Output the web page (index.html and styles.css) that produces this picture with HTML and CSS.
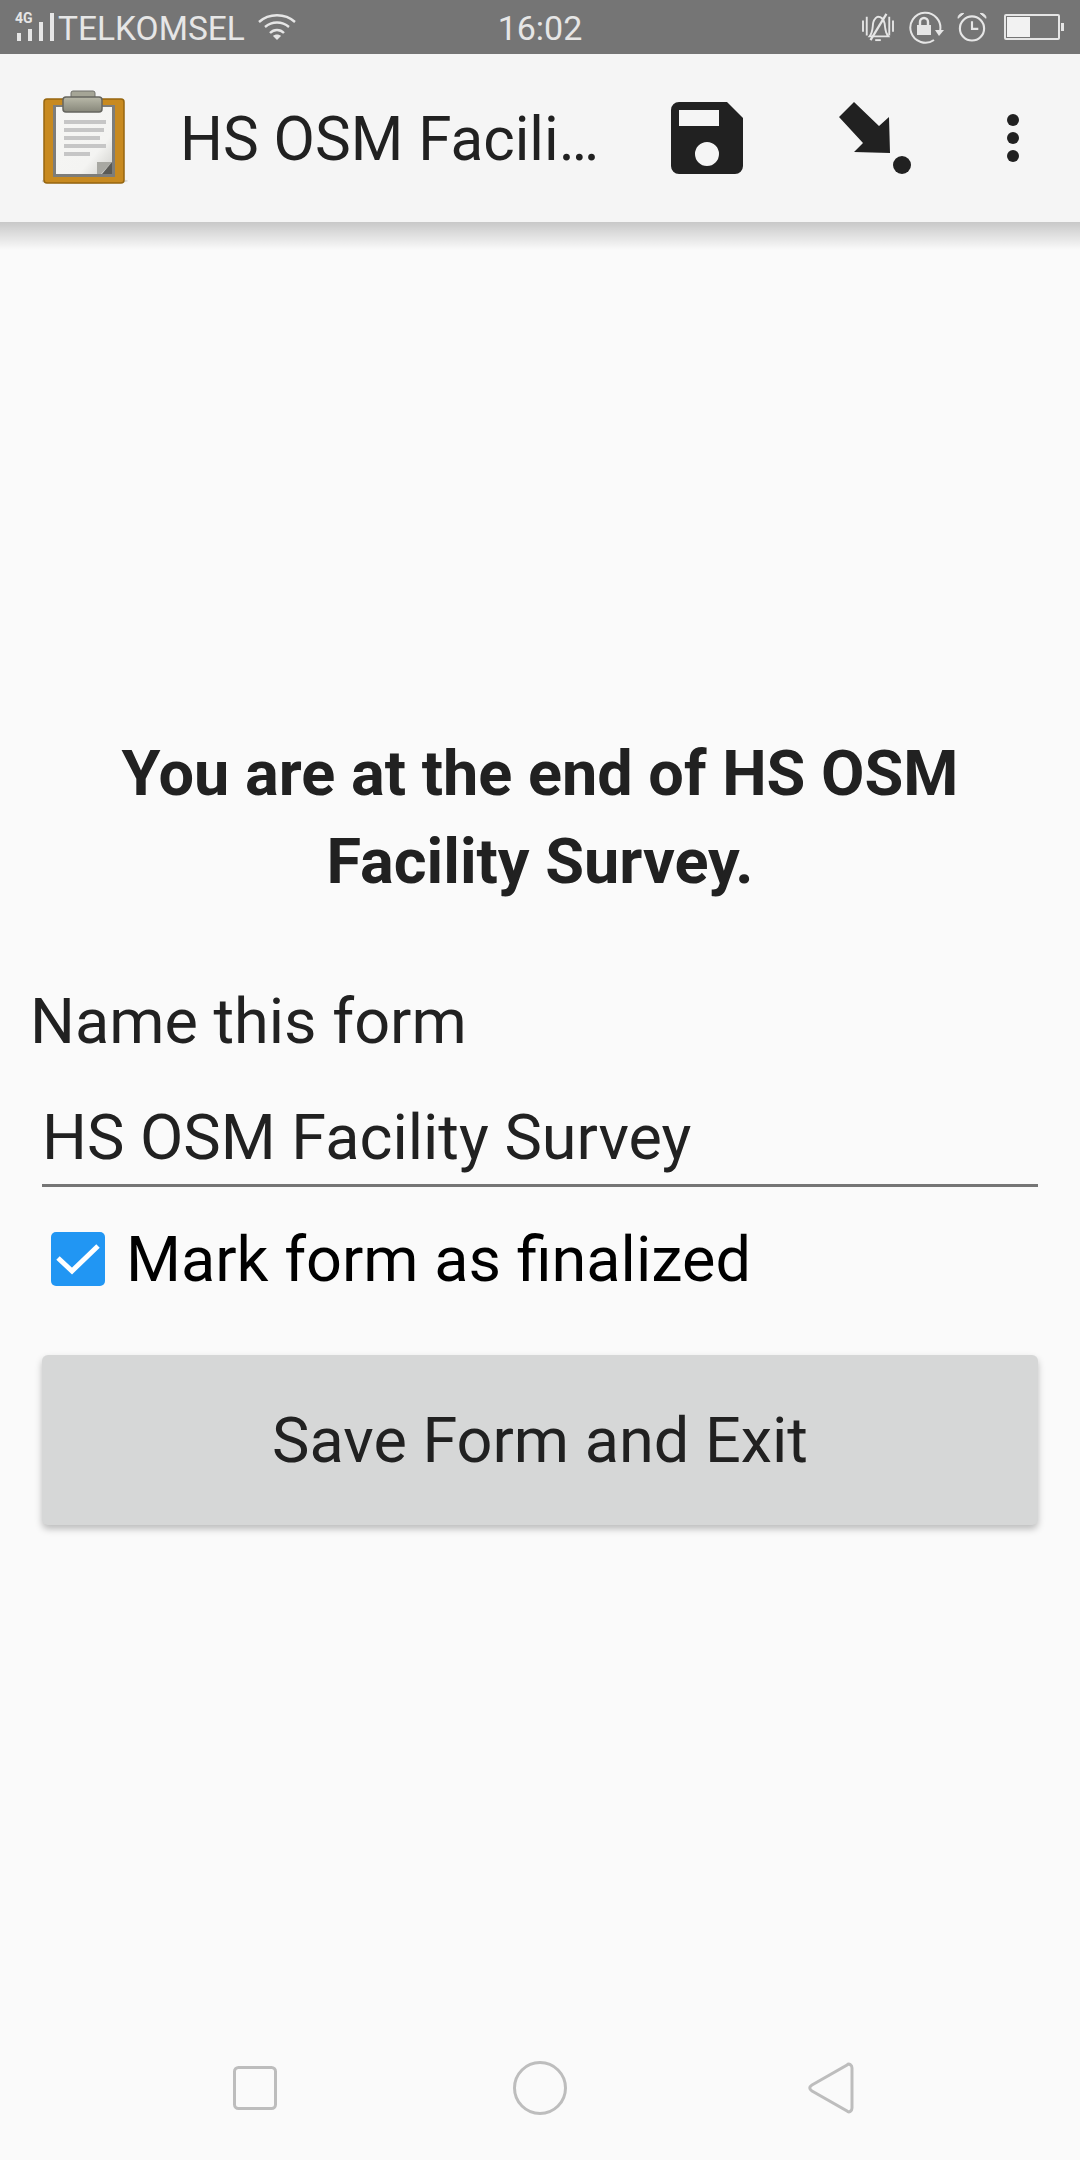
FILE: index.html
```html
<!DOCTYPE html>
<html lang="en">
<head>
    <meta charset="UTF-8">
    <meta name="viewport" content="width=device-width, initial-scale=1.0">
    <title>HS OSM Facility Survey</title>
    <link rel="stylesheet" href="styles.css">
</head>
<body>
    <div class="phone">
        <div class="status-bar">
            <div class="status-left">
                <svg class="signal" width="40" height="34" viewBox="0 0 40 34">
                    <text x="1" y="13" class="net-type">4G</text>
                    <rect x="3" y="23" width="4" height="8" fill="#e6e6e6"/>
                    <rect x="14" y="19" width="4" height="12" fill="#e6e6e6"/>
                    <rect x="25" y="12" width="4" height="19" fill="#e6e6e6"/>
                    <rect x="36" y="3" width="4" height="28" fill="#e6e6e6"/>
                </svg>
                <span class="carrier">TELKOMSEL</span>
                <svg class="wifi" width="38" height="28" viewBox="0 0 38 28" fill="none" stroke="#e6e6e6" stroke-width="2.4">
                    <path d="M1 9 C11 0 27 0 37 9"/>
                    <path d="M7 14 C14 8 24 8 31 14"/>
                    <path d="M12 20 C16 16 22 16 26 20"/>
                    <path d="M15 23 L19 27 L23 23 C21 21 17 21 15 23Z" fill="#e6e6e6" stroke="none"/>
                </svg>
            </div>
            <span class="clock">16:02</span>
            <div class="status-right">
                <svg width="34" height="30" viewBox="0 0 36 32" fill="none" stroke="#e6e6e6" stroke-width="2">
                    <path d="M2 9V21M6 5V25M30 5V25M34 9V21"/>
                    <path d="M9 26C13 21 12 15 13 11C14 7 17 5 18 5C22 5 24 8 25 12C26 17 25 21 29 26Z"/>
                    <path d="M15 30H21"/>
                    <path d="M10 30L27 2" stroke-width="2.4"/>
                </svg>
                <svg width="36" height="33" viewBox="0 0 36 33" fill="none" stroke="#e6e6e6" stroke-width="2">
                    <path d="M32 20A15 15 0 1 0 26 29"/>
                    <path d="M27 19H36L31 25Z" fill="#e6e6e6" stroke="none"/>
                    <rect x="9" y="14" width="14" height="10" fill="#e6e6e6" stroke="none"/>
                    <path d="M12 14V11A4 4 0 0 1 20 11V14" stroke-width="2.4"/>
                </svg>
                <svg width="30" height="30" viewBox="0 0 31 30" fill="none" stroke="#e6e6e6" stroke-width="2.2">
                    <circle cx="15.5" cy="16.5" r="12.5"/>
                    <path d="M15.5 9V17H22"/>
                    <path d="M1 6A5 5 0 0 1 7 1Z" fill="#e6e6e6" stroke-width="1"/>
                    <path d="M30 6A5 5 0 0 0 24 1Z" fill="#e6e6e6" stroke-width="1"/>
                </svg>
                <div class="battery">
                    <div class="battery-body"><div class="battery-level"></div></div>
                    <div class="battery-tip"></div>
                </div>
            </div>
        </div>

        <div class="toolbar">
            <svg class="app-icon" width="88" height="96" viewBox="0 0 88 96">
                <defs>
                    <linearGradient id="paper" x1="0" y1="0" x2="1" y2="1">
                        <stop offset="0" stop-color="#f6f6f4"/>
                        <stop offset="0.7" stop-color="#f4f4f2"/>
                        <stop offset="1" stop-color="#cfcfcb"/>
                    </linearGradient>
                    <linearGradient id="clip" x1="0" y1="0" x2="0" y2="1">
                        <stop offset="0" stop-color="#b9b9a9"/>
                        <stop offset="1" stop-color="#87877a"/>
                    </linearGradient>
                </defs>
                <ellipse cx="42" cy="91" rx="44" ry="3" fill="#000" opacity="0.12"/>
                <rect x="2" y="9" width="80" height="84" rx="3" fill="#c88a20" stroke="#96660f" stroke-width="1.5"/>
                <rect x="11" y="15" width="62" height="72" fill="#7d7d7a"/>
                <rect x="14" y="17" width="56" height="67" fill="url(#paper)"/>
                <rect x="22" y="30" width="42" height="4" fill="#c6c6c6"/>
                <rect x="22" y="38" width="40" height="4" fill="#c6c6c6"/>
                <rect x="22" y="46" width="36" height="4" fill="#c6c6c6"/>
                <rect x="22" y="54" width="42" height="4" fill="#c6c6c6"/>
                <rect x="22" y="62" width="26" height="4" fill="#c6c6c6"/>
                <path d="M55 84V72H70L59 84Z" fill="#a8a8a2"/>
                <path d="M60 84L70 72V84Z" fill="#5a5a56"/>
                <rect x="29" y="1" width="24" height="10" rx="2" fill="#a5a596" stroke="#70706a"/>
                <rect x="21" y="7" width="39" height="15" rx="3" fill="url(#clip)" stroke="#65655f" stroke-width="1.5"/>
            </svg>
            <span class="toolbar-title">HS OSM Facili…</span>
            <div class="toolbar-actions">
                <svg width="72" height="72" viewBox="0 0 72 72">
                    <path fill-rule="evenodd" fill="#212121" d="M8 0H56L72 16V64A8 8 0 0 1 64 72H8A8 8 0 0 1 0 64V8A8 8 0 0 1 8 0ZM8 8V24H48V8ZM36 40A12 12 0 1 0 36 64A12 12 0 1 0 36 40Z"/>
                </svg>
                <svg class="action-jump" width="72" height="72" viewBox="0 0 72 72">
                    <path fill="#212121" d="M0 15L15 0L40 24L50 15L51 51L15 50L24 41Z"/>
                    <circle cx="63" cy="63" r="9" fill="#212121"/>
                </svg>
                <svg class="action-more" width="12" height="48" viewBox="0 0 12 48">
                    <circle cx="6" cy="6" r="6" fill="#212121"/>
                    <circle cx="6" cy="24" r="6" fill="#212121"/>
                    <circle cx="6" cy="42" r="6" fill="#212121"/>
                </svg>
            </div>
        </div>

        <main class="content">
            <h1 class="end-title">You are at the end of HS OSM<br>Facility Survey.</h1>
            <div class="name-label">Name this form</div>
            <div class="name-field">HS OSM Facility Survey</div>
            <div class="finalize-row">
                <span class="checkbox">
                    <svg width="54" height="54" viewBox="0 0 54 54">
                        <path d="M7 26L21 39L47 14" fill="none" stroke="#fff" stroke-width="5"/>
                    </svg>
                </span>
                <span class="finalize-label">Mark form as finalized</span>
            </div>
            <div class="save-button">Save Form and Exit</div>
        </main>

        <div class="nav-bar">
            <svg width="44" height="44" viewBox="0 0 44 44" fill="none" stroke="#bdbdbd" stroke-width="3">
                <rect x="1.5" y="1.5" width="41" height="41" rx="4"/>
            </svg>
            <svg class="nav-home" width="54" height="54" viewBox="0 0 54 54" fill="none" stroke="#bdbdbd" stroke-width="3">
                <circle cx="27" cy="27" r="25.5"/>
            </svg>
            <svg class="nav-back" width="46" height="52" viewBox="0 0 46 52" fill="none" stroke="#bdbdbd" stroke-width="3">
                <path d="M39 3C41 1 44 3 44 6V46C44 49 41 51 39 49L4 29C1 27 1 25 4 23Z"/>
            </svg>
        </div>
    </div>
</body>
</html>
```

FILE: styles.css
```css
* {
    box-sizing: border-box;
}
body {
    margin: 0;
    background: #fafafa;
    font-family: Roboto, sans-serif;
}
.phone {
    width: 1080px;
    height: 2160px;
    display: flex;
    flex-direction: column;
    background: #fafafa;
}
.status-bar {
    height: 54px;
    background: #757575;
    color: #e6e6e6;
    display: grid;
    grid-template-columns: 1fr auto 1fr;
    align-items: center;
    padding: 0 16px 0 14px;
}
.status-left {
    display: flex;
    align-items: center;
}
.net-type {
    font-family: Roboto, sans-serif;
    font-size: 14px;
    font-weight: 700;
    fill: #e6e6e6;
}
.carrier {
    margin: 2px 0 0 4px;
    font-size: 33.5px;
}
.wifi {
    margin-left: 13px;
}
.clock {
    margin: 2px 0 0 2px;
    font-size: 34px;
}
.status-right {
    display: flex;
    align-items: center;
    justify-content: flex-end;
    gap: 13px;
}
.battery {
    display: flex;
    align-items: center;
    margin-left: 4px;
}
.battery-body {
    width: 56px;
    height: 26px;
    border: 2px solid #e6e6e6;
    border-radius: 2px;
    padding: 1px;
}
.battery-level {
    width: 23px;
    height: 100%;
    background: #f2f2f2;
}
.battery-tip {
    width: 3px;
    height: 8px;
    background: #e6e6e6;
    margin-left: 1px;
}
.toolbar {
    height: 168px;
    background: #f5f5f5;
    display: flex;
    align-items: center;
    padding-left: 42px;
    position: relative;
}
.toolbar::after {
    content: "";
    position: absolute;
    left: 0;
    right: 0;
    top: 100%;
    height: 28px;
    background: linear-gradient(rgba(0, 0, 0, 0.2), rgba(0, 0, 0, 0));
}
.toolbar-title {
    margin: 2px 0 0 50px;
    font-size: 60.2px;
    color: #212121;
    white-space: nowrap;
}
.toolbar-actions {
    display: flex;
    align-items: center;
    margin-left: 72px;
}
.action-jump {
    margin-left: 96px;
}
.action-more {
    margin-left: 96px;
}
.content {
    flex: 1;
    display: flex;
    flex-direction: column;
    padding: 508px 42px 0;
}
.end-title {
    margin: 0;
    font-size: 63px;
    line-height: 88px;
    font-weight: 700;
    color: #212121;
    text-align: center;
}
.name-label {
    margin: 81px 0 0 -12px;
    font-size: 63px;
    line-height: 70px;
    color: #212121;
}
.name-field {
    margin-top: 46px;
    height: 81px;
    font-size: 63px;
    line-height: 70px;
    color: #212121;
}
.finalize-row {
    border-top: 3px solid #757575;
    padding: 36px 0 0 9px;
    display: flex;
    align-items: center;
}
.checkbox {
    width: 54px;
    height: 54px;
    background: #2196f3;
    border-radius: 5px;
    display: flex;
}
.finalize-label {
    margin: 2px 0 0 21px;
    font-size: 63px;
    line-height: 70px;
    color: #000;
}
.save-button {
    margin-top: 60px;
    height: 170px;
    background: #d6d7d7;
    border-radius: 6px;
    box-shadow: 0 4px 7px rgba(0, 0, 0, 0.25);
    display: flex;
    align-items: center;
    justify-content: center;
    font-size: 63px;
    color: #212121;
}
.nav-bar {
    height: 140px;
    display: flex;
    align-items: center;
    padding: 0 0 4px 233px;
}
.nav-home {
    margin-left: 236px;
}
.nav-back {
    margin-left: 241px;
}
```
